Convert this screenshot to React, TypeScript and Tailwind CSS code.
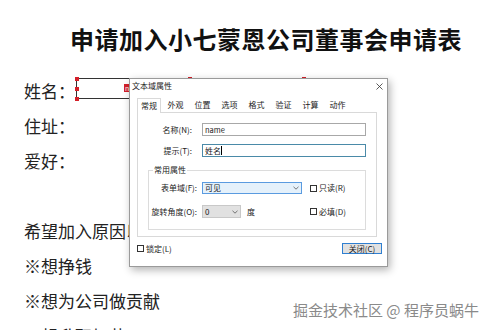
import React from "react";

function Chevron() {
  return (
    <svg width="6" height="4" viewBox="0 0 6 4" className="shrink-0">
      <path d="M0.5 0.8 L3 3.2 L5.5 0.8" fill="none" stroke="#555" strokeWidth="0.8" />
    </svg>
  );
}

function Check({ label }: { label: string }) {
  return (
    <div className="flex items-center">
      <div className="w-[7px] h-[7px] border border-[#333] bg-white" />
      <span className="ml-[2px]">{label}</span>
    </div>
  );
}

function Handle({ cls }: { cls: string }) {
  return <div className={"absolute w-[4px] h-[4px] bg-[#d4202a] " + cls} />;
}

export default function App() {
  return (
    <div className="relative w-[498px] h-[330px] overflow-hidden bg-white text-[#222] font-['Noto_Sans_CJK_SC','Noto_Sans',sans-serif]">
      <div className="pt-[19px]">
        <h1 className="pl-[70px] h-[40px] leading-[40px] text-[24px] font-bold tracking-[0.5px] text-[#111] whitespace-nowrap">
          申请加入小七蒙恩公司董事会申请表
        </h1>
        <div className="mt-[14px] pl-[24px] text-[17px] leading-[35px] whitespace-nowrap">
          <div className="flex h-[35px]">
            <span>姓名：</span>
            <div className="relative ml-[1px] mt-[5px] w-[228px] h-[21px] border border-[#333]">
              <Handle cls="left-[-2.5px] top-[-2.5px]" />
              <Handle cls="left-[-2.5px] top-[8px]" />
              <Handle cls="left-[-2.5px] bottom-[-2.5px]" />
              <Handle cls="left-[111px] top-[-2.5px]" />
              <Handle cls="left-[111px] bottom-[-2.5px]" />
              <Handle cls="right-[-2.5px] top-[-2.5px]" />
              <Handle cls="right-[-2.5px] top-[8px]" />
              <Handle cls="right-[-2.5px] bottom-[-2.5px]" />
              <div className="absolute left-[47px] top-[5px] w-[12px] h-[8px] bg-[#d4202a] text-white text-[7px] leading-[8px] pl-[1px]">
                na
              </div>
            </div>
          </div>
          <div className="h-[35px]">住址：</div>
          <div className="h-[35px]">爱好：</div>
          <div className="h-[35px]" />
          <div className="h-[35px]">希望加入原因以下：</div>
          <div className="h-[35px]">※想挣钱</div>
          <div className="h-[35px]">※想为公司做贡献</div>
          <div className="h-[35px]">※想升职加薪</div>
        </div>
      </div>

      {/* Dialog */}
      <div className="absolute left-[129px] top-[78px] w-[259px] h-[189px] border border-[#9a9a9a] bg-white shadow-[2px_3px_8px_rgba(0,0,0,0.3)] text-[8px] leading-none text-[#222] whitespace-nowrap">
        <div className="flex h-[14px] items-center justify-between pl-[2px] pr-[4px]">
          <span>文本域属性</span>
          <svg width="7" height="7" viewBox="0 0 7 7">
            <path d="M0.5 0.5 L6.5 6.5 M6.5 0.5 L0.5 6.5" stroke="#333" strokeWidth="0.8" />
          </svg>
        </div>
        <div className="pl-[7px] pr-[5px]">
          <div className="mt-[5px] flex items-end h-[14px]">
            <div className="relative z-10 -mb-px w-[24px] h-[15px] border border-b-0 border-[#d9d9d9] bg-white flex items-center justify-center">
              常规
            </div>
            <div className="ml-[1px] flex">
              {["外观", "位置", "选项", "格式", "验证", "计算", "动作"].map((t) => (
                <div key={t} className="w-[27px] h-[14px] flex items-center justify-center">
                  {t}
                </div>
              ))}
            </div>
          </div>
          <div className="w-[240px] h-[125px] border border-[#d9d9d9] pt-[10px]">
            <div className="flex items-center h-[13px]">
              <div className="w-[54px] text-right">名称(N):</div>
              <div className="ml-[10px] w-[164px] h-[13px] border border-[#a8a8a8] px-[2px] flex items-center text-[7.5px]">
                name
              </div>
            </div>
            <div className="mt-[8px] flex items-center h-[13px]">
              <div className="w-[54px] text-right">提示(T):</div>
              <div className="ml-[10px] w-[164px] h-[13px] border border-[#4a8aa8] px-[2px] flex items-center">
                <span>姓名</span>
                <span className="w-[1px] h-[9px] bg-black" />
              </div>
            </div>
            <div className="relative ml-[10px] mt-[13px] w-[218px] h-[60px] border border-[#dcdcdc] pt-[11px]">
              <span className="absolute left-[4px] top-[-5px] bg-white px-[1px]">常用属性</span>
              <div className="flex items-center h-[12px]">
                <div className="w-[48px] text-right">表单域(F):</div>
                <div className="ml-[5px] w-[108px]">
                  <div className="w-[100px] h-[12px] bg-[#e5f1fb] border border-[#5a9be0] flex items-center justify-between px-[2px]">
                    <span>可见</span>
                    <Chevron />
                  </div>
                </div>
                <Check label="只读(R)" />
              </div>
              <div className="mt-[11px] flex items-center h-[13px]">
                <div className="w-[48px] text-right">旋转角度(O):</div>
                <div className="ml-[5px] w-[108px] flex items-center">
                  <div className="w-[39px] h-[13px] bg-[#e1e1e1] border border-[#c8c8c8] flex items-center justify-between px-[2px]">
                    <span>0</span>
                    <Chevron />
                  </div>
                  <span className="ml-[6px]">度</span>
                </div>
                <Check label="必填(D)" />
              </div>
            </div>
          </div>
          <div className="mt-[6px] flex items-center justify-between h-[11px]">
            <Check label="锁定(L)" />
            <div className="w-[40px] h-[11px] border border-[#2f7fd1] bg-[#e1e1e1] flex items-center justify-center">
              关闭(C)
            </div>
          </div>
        </div>
      </div>

      <div className="absolute left-[293px] top-[300px] text-[15px] leading-[20px] text-[#8a8a8a] whitespace-nowrap">
        掘金技术社区 @ 程序员蜗牛
      </div>
    </div>
  );
}
